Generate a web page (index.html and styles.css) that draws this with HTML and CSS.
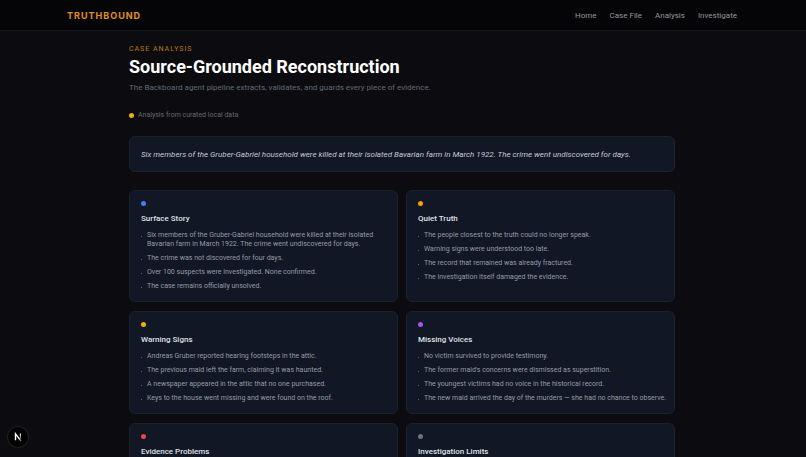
FILE: index.html
```html
<!DOCTYPE html>
<html lang="en">
<head>
<meta charset="utf-8">
<meta name="viewport" content="width=device-width, initial-scale=1">
<title>Truthbound</title>
<link rel="stylesheet" href="styles.css">
</head>
<body>
<header class="site-header">
  <div class="header-inner">
    <a class="brand" href="#">TRUTHBOUND</a>
    <nav class="nav">
      <a href="#">Home</a>
      <a href="#">Case File</a>
      <a href="#">Analysis</a>
      <a href="#">Investigate</a>
    </nav>
  </div>
</header>
<main class="page">
  <p class="eyebrow">CASE ANALYSIS</p>
  <h1 class="title">Source-Grounded Reconstruction</h1>
  <p class="lead">The Backboard agent pipeline extracts, validates, and guards every piece of evidence.</p>
  <p class="status"><span class="dot yellow"></span>Analysis from curated local data</p>
  <p class="summary">Six members of the Gruber-Gabriel household were killed at their isolated Bavarian farm in March 1922. The crime went undiscovered for days.</p>
  <div class="cards">
    <section class="card">
      <span class="dot blue"></span>
      <h2>Surface Story</h2>
      <ul>
        <li>Six members of the Gruber-Gabriel household were killed at their isolated Bavarian farm in March 1922. The crime went undiscovered for days.</li>
        <li>The crime was not discovered for four days.</li>
        <li>Over 100 suspects were investigated. None confirmed.</li>
        <li>The case remains officially unsolved.</li>
      </ul>
    </section>
    <section class="card">
      <span class="dot amber"></span>
      <h2>Quiet Truth</h2>
      <ul>
        <li>The people closest to the truth could no longer speak.</li>
        <li>Warning signs were understood too late.</li>
        <li>The record that remained was already fractured.</li>
        <li>The investigation itself damaged the evidence.</li>
      </ul>
    </section>
    <section class="card">
      <span class="dot yellow"></span>
      <h2>Warning Signs</h2>
      <ul>
        <li>Andreas Gruber reported hearing footsteps in the attic.</li>
        <li>The previous maid left the farm, claiming it was haunted.</li>
        <li>A newspaper appeared in the attic that no one purchased.</li>
        <li>Keys to the house went missing and were found on the roof.</li>
      </ul>
    </section>
    <section class="card">
      <span class="dot purple"></span>
      <h2>Missing Voices</h2>
      <ul>
        <li>No victim survived to provide testimony.</li>
        <li>The former maid's concerns were dismissed as superstition.</li>
        <li>The youngest victims had no voice in the historical record.</li>
        <li>The new maid arrived the day of the murders — she had no chance to observe.</li>
      </ul>
    </section>
    <section class="card">
      <span class="dot red"></span>
      <h2>Evidence Problems</h2>
    </section>
    <section class="card">
      <span class="dot gray"></span>
      <h2>Investigation Limits</h2>
    </section>
  </div>
</main>
<button class="dev-badge" type="button" aria-label="Open developer tools">
  <svg viewBox="0 0 20 20" width="20" height="20" aria-hidden="true">
    <defs>
      <linearGradient id="fade-diagonal" x1="11" y1="11" x2="14" y2="15" gradientUnits="userSpaceOnUse"><stop stop-color="#fff"/><stop offset="1" stop-color="#fff" stop-opacity="0.1"/></linearGradient>
      <linearGradient id="fade-stem" x1="0" y1="6" x2="0" y2="13" gradientUnits="userSpaceOnUse"><stop stop-color="#fff"/><stop offset="1" stop-color="#fff" stop-opacity="0.2"/></linearGradient>
    </defs>
    <path d="M7.5 13.3V6.8L13 14.1" fill="none" stroke="url(#fade-diagonal)" stroke-width="1.4"/>
    <path d="M12.4 6.5V12.5" fill="none" stroke="url(#fade-stem)" stroke-width="1.2"/>
  </svg>
</button>
</body>
</html>
```
FILE: styles.css
```css
* { box-sizing: border-box; }

html { background: #0c0c10; overflow: hidden; }

body {
  margin: 0;
  font-family: Roboto, "Liberation Sans", sans-serif;
  color: #e5e7eb;
}

h1, h2, p, ul { margin: 0; padding: 0; }

a { color: inherit; text-decoration: none; }

.site-header {
  background: #050507;
  border-bottom: 1px solid #14151a;
  padding-right: 2px;
}

.header-inner {
  display: flex;
  justify-content: space-between;
  align-items: center;
  max-width: 670px;
  height: 30px;
  margin: 0 auto;
}

.brand {
  color: #e0921a;
  font-family: Inter, sans-serif;
  font-size: 9px;
  font-weight: 700;
  letter-spacing: 1px;
}

.nav {
  display: flex;
  gap: 13px;
  color: #92969f;
  font-size: 8px;
}

.page {
  max-width: 548px;
  margin: 0 auto;
  padding: 13px 2px 24px 0;
}

.eyebrow {
  color: #b97912;
  font-size: 7px;
  line-height: 10px;
  letter-spacing: 1px;
}

.title {
  margin-top: 3px;
  color: #fff;
  font-size: 18px;
  font-weight: 700;
  line-height: 20px;
}

.lead {
  margin-top: 5px;
  color: #626873;
  font-size: 8px;
  line-height: 12px;
}

.status {
  display: flex;
  align-items: center;
  gap: 4px;
  margin-top: 16px;
  color: #626873;
  font-size: 7px;
  line-height: 10px;
}

.dot {
  display: block;
  width: 5px;
  height: 5px;
  border-radius: 50%;
}

.blue { background: #3b82f6; }
.amber { background: #f59e0b; }
.yellow { background: #eab308; }
.purple { background: #a855f7; }
.red { background: #ef4444; }
.gray { background: #6b7280; }

.summary {
  margin-top: 16px;
  padding: 12px 11px 10px;
  background: #111724;
  border: 1px solid #1a2230;
  border-radius: 6px;
  color: #c5cad2;
  font-size: 8px;
  font-style: italic;
  line-height: 12px;
}

.cards {
  display: grid;
  grid-template-columns: repeat(2, minmax(0, 1fr));
  gap: 9px 8px;
  margin-top: 18px;
}

.card {
  padding: 10px 6px 10px 11px;
  background: #111724;
  border: 1px solid #1a2230;
  border-radius: 6px;
}

.card h2 {
  margin-top: 7px;
  color: #dfe2e7;
  font-size: 8px;
  font-weight: 500;
  line-height: 12px;
}

.card ul {
  display: grid;
  align-content: start;
  gap: 5px;
  margin-top: 6px;
  list-style: none;
  color: #959ba6;
  font-size: 7px;
  line-height: 9px;
}

.card li {
  display: flex;
  gap: 5px;
}

.card li::before {
  content: "";
  flex: none;
  width: 1px;
  height: 1px;
  margin-top: 5px;
  background: #59606e;
}

.dev-badge {
  position: fixed;
  left: 8px;
  bottom: 10px;
  width: 20px;
  height: 20px;
  padding: 0;
  border: 0;
  border-radius: 50%;
  background: #000;
  box-shadow: 0 0 0 1px #1d1d21;
}

.dev-badge svg { display: block; }
```
